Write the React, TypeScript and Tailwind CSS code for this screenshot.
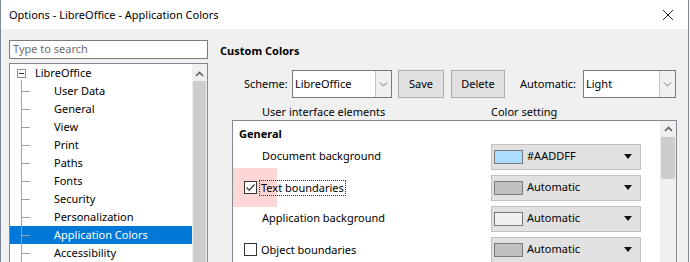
import React from "react";

const treeItems = [
  "User Data",
  "General",
  "View",
  "Print",
  "Paths",
  "Fonts",
  "Security",
  "Personalization",
  "Application Colors",
  "Accessibility",
];

type ColorRow = {
  label: string;
  check?: boolean;
  checked?: boolean;
  swatch: string;
  value: string;
};

const rows: ColorRow[] = [
  { label: "Document background", swatch: "#AADDFF", value: "#AADDFF" },
  { label: "Text boundaries", check: true, checked: true, swatch: "#c0c0c0", value: "Automatic" },
  { label: "Application background", swatch: "#f0f0f0", value: "Automatic" },
  { label: "Object boundaries", check: true, swatch: "#c0c0c0", value: "Automatic" },
];

function Chevron({ up }: { up?: boolean }) {
  return (
    <svg width="9" height="6" viewBox="0 0 9 6">
      <path
        d={up ? "M1 5 L4.5 1.5 L8 5" : "M1 1.5 L4.5 5 L8 1.5"}
        fill="none"
        stroke={up ? "#606060" : "#707070"}
        strokeWidth={up ? 1.6 : 1}
      />
    </svg>
  );
}

function Combo({ value, width }: { value: string; width: string }) {
  return (
    <div className={`flex h-[28px] ${width} border border-[#7a7a7a] bg-white`}>
      <div className="flex flex-1 items-center pl-[2px] text-black">{value}</div>
      <div className="flex w-[16px] items-center justify-center border-l border-[#c4c4c4] bg-[#f0f0f0]">
        <Chevron />
      </div>
    </div>
  );
}

function Button({ label, width }: { label: string; width: string }) {
  return (
    <div className={`flex h-[28px] ${width} items-center justify-center border border-[#adadad] bg-[#e1e1e1]`}>
      {label}
    </div>
  );
}

function Checkbox({ checked }: { checked?: boolean }) {
  return (
    <div className="flex h-[13px] w-[13px] items-center justify-center border border-[#333] bg-white">
      {checked ? (
        <svg width="11" height="11" viewBox="0 0 11 11">
          <path d="M1.5 5.5 L4.2 8.2 L9.5 2.5" fill="none" stroke="#333" strokeWidth="1.2" />
        </svg>
      ) : null}
    </div>
  );
}

export default function App() {
  return (
    <div
      className="h-[262px] w-[690px] overflow-hidden bg-white text-[11px] text-black"
      style={{ fontFamily: '"Noto Sans", "Open Sans", sans-serif' }}
    >
      <div className="flex h-[262px] w-[689px] flex-col border-x border-[#7d8797]">
        {/* title bar */}
        <div className="flex h-[29px] shrink-0 items-center justify-between bg-white pl-[8px] pr-[14px]">
          <span className="pt-[1px]">Options - LibreOffice - Application Colors</span>
          <svg width="12" height="12" viewBox="0 0 12 12">
            <path d="M1 1 L11 11 M11 1 L1 11" stroke="#222" strokeWidth="1" />
          </svg>
        </div>

        <div className="flex flex-1 bg-[#f0f0f0] pl-[8px]">
          {/* left column */}
          <div className="flex w-[199px] flex-col pt-[11px]">
            <div className="flex h-[19px] items-center border border-[#7a7a7a] bg-white pl-[3px] text-[#6d6d6d]">
              Type to search
            </div>
            <div className="mt-[4px] flex flex-1 border border-[#828790] bg-white">
              <div className="relative flex-1">
                <div className="absolute left-[11px] top-[16px] h-[200px] w-px bg-[#a0a0a0]" />
                <div className="flex h-[18px] items-center">
                  <div className="ml-[7px] flex h-[9px] w-[9px] items-center justify-center border border-[#919191] bg-white">
                    <div className="h-px w-[5px] bg-[#333]" />
                  </div>
                  <span className="ml-[9px]">LibreOffice</span>
                </div>
                {treeItems.map((t) => (
                  <div
                    key={t}
                    className={`flex h-[18px] items-center ${
                      t === "Application Colors" ? "bg-[#0078d7] text-white" : ""
                    }`}
                  >
                    <div className="ml-[12px] h-px w-[8px] bg-[#a0a0a0]" />
                    <span className="ml-[24px]">{t}</span>
                  </div>
                ))}
              </div>
              <div className="flex w-[15px] flex-col bg-[#f0f0f0]">
                <div className="flex h-[17px] items-center justify-center pt-[2px]">
                  <Chevron up />
                </div>
                <div className="mx-px flex-1 bg-[#cdcdcd]" />
              </div>
            </div>
          </div>

          {/* right column */}
          <div className="ml-[12px] flex flex-1 flex-col pt-[14px]">
            <div className="h-[16px] font-bold leading-[16px]">Custom Colors</div>
            <div className="mt-[11px] flex items-center">
              <span className="ml-[24px] w-[48px]">Scheme:</span>
              <Combo value="LibreOffice" width="w-[100px]" />
              <div className="ml-[6px]">
                <Button label="Save" width="w-[46px]" />
              </div>
              <div className="ml-[7px]">
                <Button label="Delete" width="w-[54px]" />
              </div>
              <span className="ml-[15px] w-[63px]">Automatic:</span>
              <Combo value="Light" width="w-[93px]" />
            </div>
            <div className="mt-[6px] flex h-[16px] items-center">
              <span className="ml-[42px] w-[229px]">User interface elements</span>
              <span>Color setting</span>
            </div>

            {/* table */}
            <div className="ml-[12px] flex w-[445px] flex-1 border border-[#828790] bg-white">
              <div className="relative flex-1">
                <div className="absolute left-0 top-[47px] h-[39px] w-[44px] bg-[#ffd6d6]" />
                <div className="relative h-[20px] pl-[6px] pt-[5px] font-bold leading-[15px]">General</div>
                {rows.map((r) => (
                  <div key={r.label} className="relative flex h-[31px] items-center">
                    <div className="flex w-[258px] items-center pl-[11px]">
                      {r.check ? (
                        <>
                          <Checkbox checked={r.checked} />
                          <span
                            className={`ml-[2px] px-[1px] leading-[14px] ${
                              r.checked ? "border border-dotted border-[#333]" : "border border-transparent"
                            }`}
                          >
                            {r.label}
                          </span>
                        </>
                      ) : (
                        <span className="ml-[18px]">{r.label}</span>
                      )}
                    </div>
                    <div className="flex h-[26px] w-[150px] items-center border border-[#c0c0c0] bg-[#e1e1e1]">
                      <div
                        className="ml-[2px] h-[14px] w-[29px] border border-[#7a7a7a]"
                        style={{ backgroundColor: r.swatch }}
                      />
                      <span className="ml-[4px] flex-1">{r.value}</span>
                      <svg width="8" height="5" viewBox="0 0 8 5" className="mr-[8px]">
                        <path d="M0 0 H8 L4 5 Z" fill="#111" />
                      </svg>
                    </div>
                  </div>
                ))}
              </div>
              <div className="flex w-[16px] flex-col bg-[#f0f0f0]">
                <div className="flex h-[16px] items-center justify-center">
                  <Chevron up />
                </div>
                <div className="mx-px h-[42px] bg-[#cdcdcd]" />
              </div>
            </div>
          </div>
        </div>
      </div>
    </div>
  );
}
